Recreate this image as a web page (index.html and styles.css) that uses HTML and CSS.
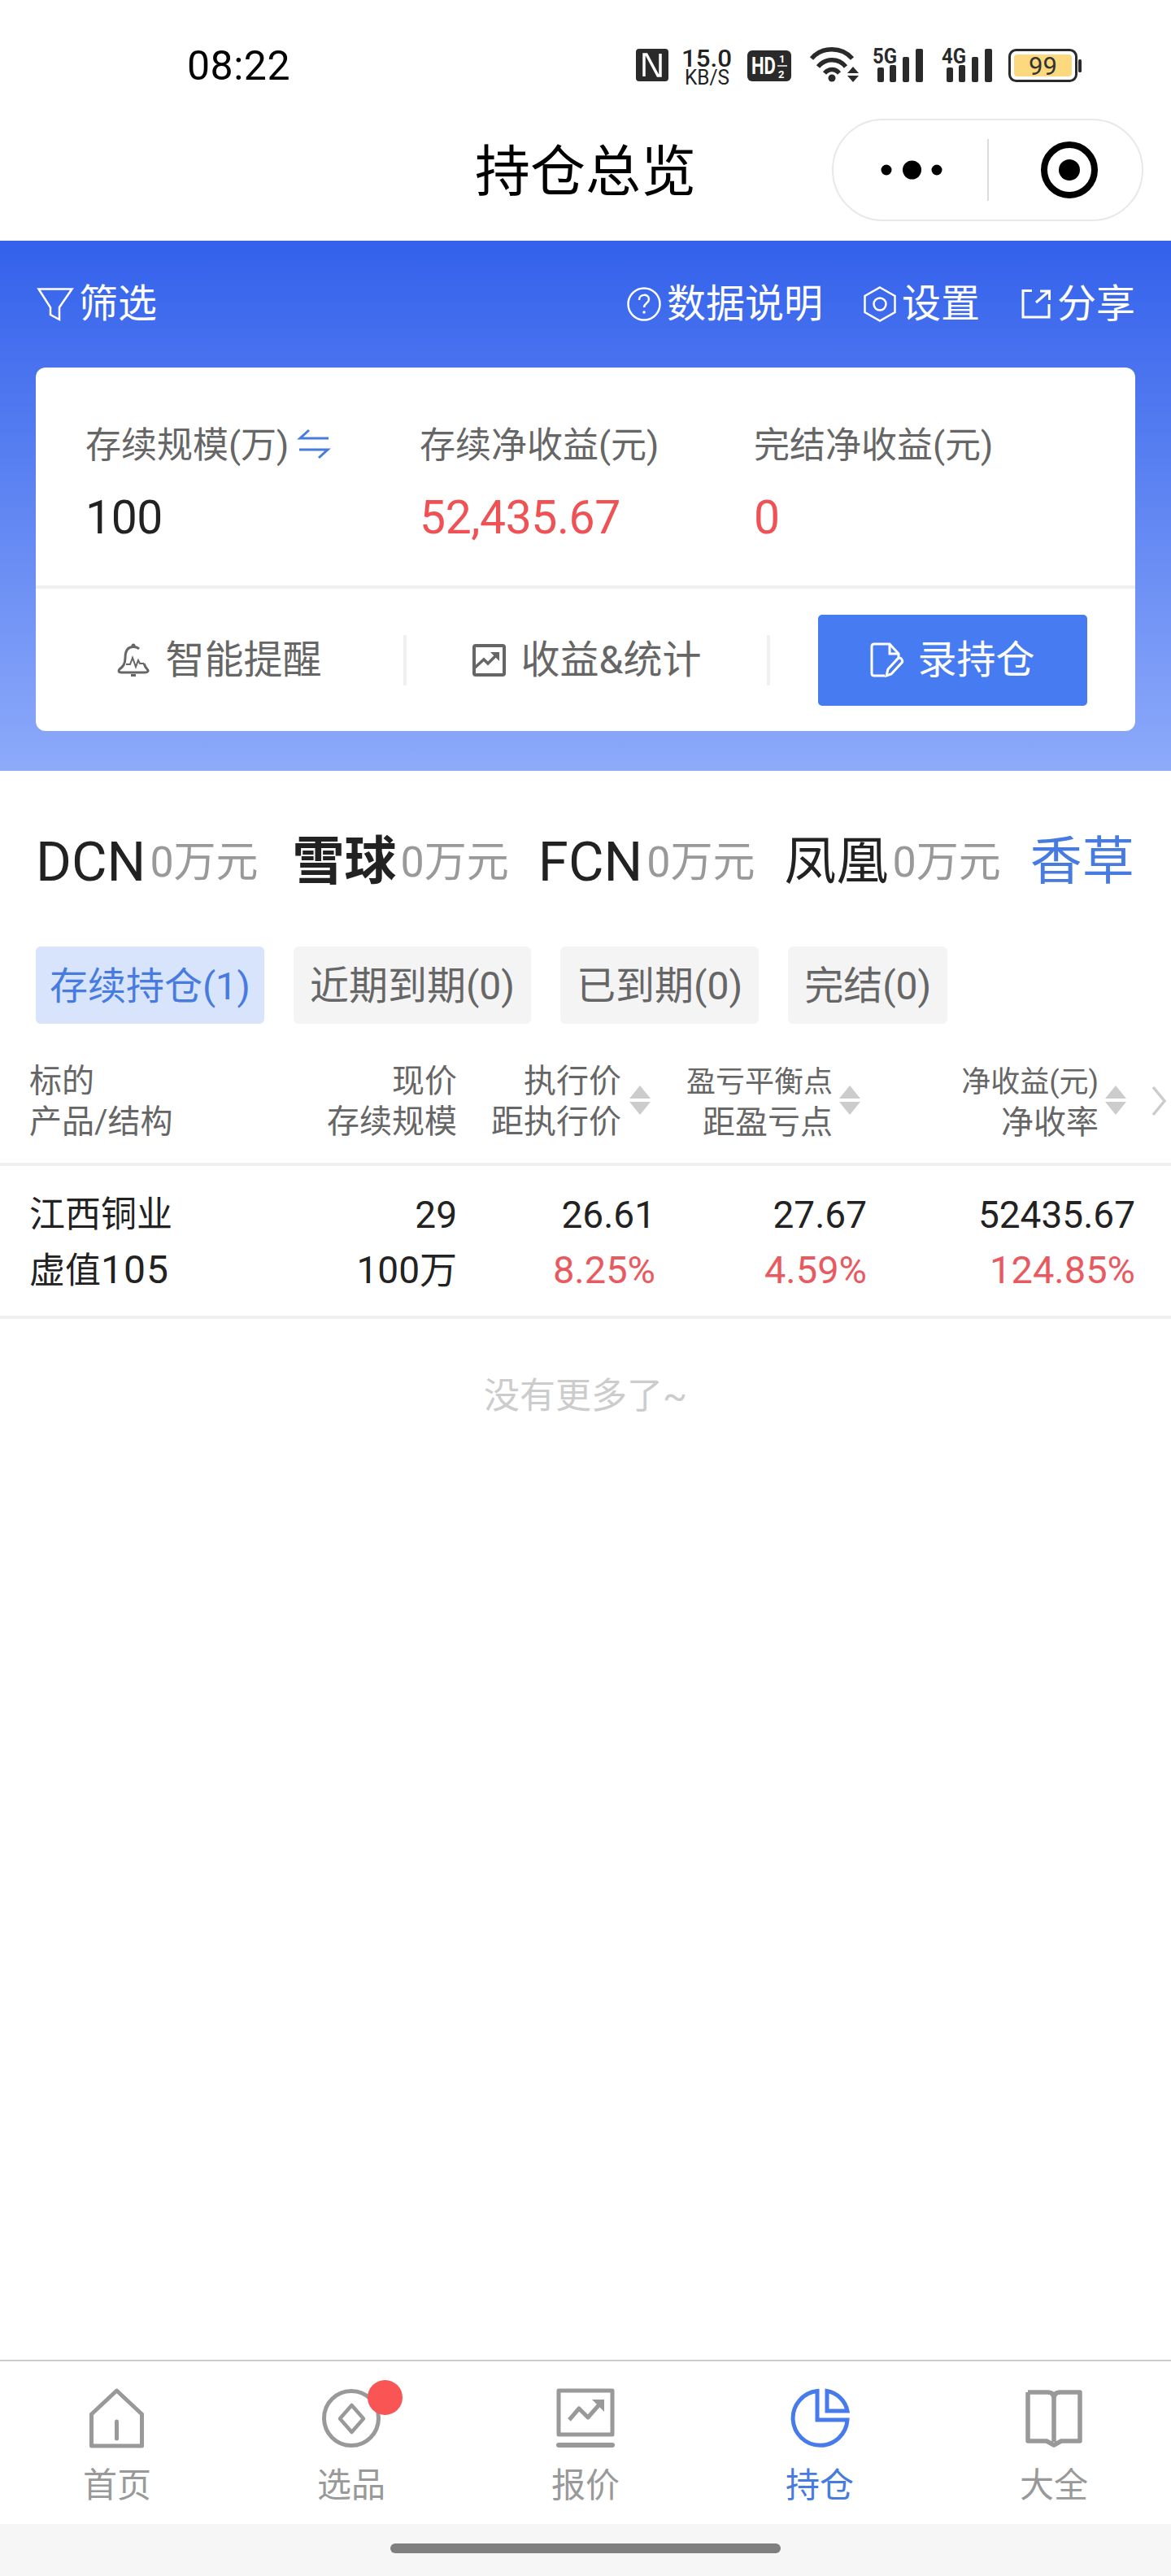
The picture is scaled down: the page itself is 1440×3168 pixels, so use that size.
FILE: index.html
```html
<!DOCTYPE html>
<html lang="zh-CN">
<head>
<meta charset="utf-8">
<title>持仓总览</title>
<link rel="stylesheet" href="styles.css">
</head>
<body>
<div class="page">
  <header class="status">
    <span class="time">08:22</span>
    <div class="sicons">
      <svg class="s-nfc" width="40" height="40" viewBox="0 0 40 40"><rect width="40" height="40" rx="4" fill="#2a2a2a"/><path d="M10 34V7h3l14 26h3V6" fill="none" stroke="#fff" stroke-width="3.500"/></svg>
      <svg class="s-speed" width="64" height="48" viewBox="0 0 64 48"><text x="1" y="24" class="sp1" textLength="62" lengthAdjust="spacingAndGlyphs">15.0</text><text x="5" y="46" class="sp2" textLength="55" lengthAdjust="spacingAndGlyphs">KB/S</text></svg>
      <svg class="s-hd" width="54" height="38" viewBox="0 0 54 38"><rect width="54" height="38" rx="6" fill="#2a2a2a"/><text x="5" y="29" class="hd" textLength="30" lengthAdjust="spacingAndGlyphs">HD</text><text x="39" y="15" class="hd2">1</text><text x="38" y="34" class="hd2">2</text><path d="M37 19h12" stroke="#fff" stroke-width="1.500"/></svg>
      <svg class="s-wifi" width="60" height="44" viewBox="0 0 60 44"><g fill="none" stroke="#2a2a2a" stroke-width="5.500"><path d="M2 15C15 0 39 0 52 15"/><path d="M10 25C19 14 35 14 44 25"/><path d="M18 33C23 27 31 27 36 33"/></g><circle cx="27" cy="39" r="4.500" fill="#2a2a2a"/><path d="M53 25l7 8H46zM46 36h14l-7 8z" fill="#2a2a2a"/></svg>
      <svg class="s-sig" width="62" height="44" viewBox="0 0 62 44"><text x="0" y="21" class="sg" textLength="30" lengthAdjust="spacingAndGlyphs">5G</text><rect x="6" y="26" width="8" height="18" rx="2"/><rect x="21" y="23" width="8" height="21" rx="2"/><rect x="37" y="13" width="8" height="31" rx="2"/><rect x="53" y="3" width="9" height="41" rx="2"/></svg>
      <svg class="s-sig" width="62" height="44" viewBox="0 0 62 44"><text x="0" y="21" class="sg" textLength="30" lengthAdjust="spacingAndGlyphs">4G</text><rect x="6" y="26" width="8" height="18" rx="2"/><rect x="21" y="23" width="8" height="21" rx="2"/><rect x="37" y="13" width="8" height="31" rx="2"/><rect x="53" y="3" width="9" height="41" rx="2"/></svg>
      <svg class="s-bat" width="90" height="42" viewBox="0 0 90 42"><rect x="1.500" y="1.500" width="82" height="38" rx="8" fill="#fff" stroke="#2a2a2a" stroke-width="3"/><rect x="7" y="7" width="71" height="27" rx="4" fill="#fcd97e"/><text x="42.500" y="32" class="bt">99</text><rect x="86" y="13" width="4" height="16" rx="1.500" fill="#2a2a2a"/></svg>
    </div>
  </header>

  <nav class="navbar">
    <span></span>
    <h1 class="title">持仓总览</h1>
    <div class="capsule">
      <svg width="90" height="26" viewBox="0 0 90 26"><circle cx="13" cy="13" r="6.500"/><circle cx="44.500" cy="13" r="11.500"/><circle cx="75" cy="13" r="6.500"/></svg>
      <i class="cap-line"></i>
      <svg width="72" height="72" viewBox="0 0 72 72"><circle cx="36" cy="36" r="31" fill="none" stroke="#000" stroke-width="8"/><circle cx="36" cy="36" r="13"/></svg>
    </div>
  </nav>

  <section class="hero">
    <div class="toolbar">
      <div class="tool">
        <svg width="44" height="40" viewBox="0 0 44 40"><path d="M1.500 1.500H42.500L27 24V39L16 33V24Z" fill="none" stroke="#fff" stroke-width="2.500"/></svg>
        <span>筛选</span>
      </div>
      <div class="tools-right">
        <div class="tool">
          <svg width="42" height="42" viewBox="0 0 42 42"><circle cx="21" cy="21" r="19.500" fill="none" stroke="#fff" stroke-width="2.500"/><path d="M15 16c0-8 12-8 12-1 0 5-6 5-6 10" fill="none" stroke="#fff" stroke-width="2.500"/><circle cx="21" cy="31" r="1.800" fill="#fff"/></svg>
          <span>数据说明</span>
        </div>
        <div class="tool">
          <svg width="40" height="44" viewBox="0 0 40 44"><path d="M20 1.500 38.500 12V32L20 42.500 1.500 32V12Z" fill="none" stroke="#fff" stroke-width="2.500"/><circle cx="20" cy="22" r="7.500" fill="none" stroke="#fff" stroke-width="2.500"/></svg>
          <span>设置</span>
        </div>
        <div class="tool">
          <svg width="38" height="38" viewBox="0 0 38 38"><path d="M14 2.500H3V35H35V19" fill="none" stroke="#fff" stroke-width="3"/><path d="M19 17 34 4M24 3H35.500V14" fill="none" stroke="#fff" stroke-width="3"/></svg>
          <span>分享</span>
        </div>
      </div>
    </div>

    <div class="card">
      <div class="stats">
        <div class="stat">
          <div class="stat-label">存续规模(万)<svg class="swap" width="38" height="36" viewBox="0 0 38 36"><path d="M37 11H2L13 1M1 25H36L25 35" fill="none" stroke="#477bdf" stroke-width="3"/></svg></div>
          <div class="stat-value">100</div>
        </div>
        <div class="stat">
          <div class="stat-label">存续净收益(元)</div>
          <div class="stat-value red">52,435.67</div>
        </div>
        <div class="stat">
          <div class="stat-label">完结净收益(元)</div>
          <div class="stat-value red">0</div>
        </div>
      </div>
      <div class="actions">
        <div class="action">
          <svg width="40" height="42" viewBox="0 0 40 42"><circle cx="20" cy="3" r="2.500" fill="#666"/><path d="M27 7C25 5 23 4.500 20 4.500 12 4.500 10 11 10 18 10 26 7 29 3 32 1 34 2 36 5 36H34C38 36 39 34 37 32 35 30 34 28 33 25" fill="none" stroke="#666" stroke-width="3"/><path d="M11 26h5l3-8 4 11 3-8 2 4h5" fill="none" stroke="#666" stroke-width="2"/><path d="M17 39.500h6" stroke="#666" stroke-width="3"/></svg>
          <span>智能提醒</span>
        </div>
        <i class="a-line"></i>
        <div class="action">
          <svg width="41" height="40" viewBox="0 0 41 40"><rect x="2" y="2" width="37" height="36" rx="2" fill="none" stroke="#666" stroke-width="4"/><path d="M3 29 14 19l5 5L30 13" fill="none" stroke="#666" stroke-width="3.500"/><path d="M22 10H33V21Z" fill="#666"/></svg>
          <span>收益&amp;统计</span>
        </div>
        <i class="a-line"></i>
        <div class="action">
          <button class="rec" type="button">
            <svg width="42" height="44" viewBox="0 0 42 44"><path d="M18 41H5Q2 41 2 38V5Q2 2 5 2H24L35 14V19" fill="none" stroke="#fff" stroke-width="3"/><path d="M24 2V14H35" fill="none" stroke="#fff" stroke-width="3"/><path d="M20 41 22 33 34 20Q37 18 39 21 41 24 38 26L26 39Z" fill="none" stroke="#fff" stroke-width="3"/></svg>
            <span>录持仓</span>
          </button>
        </div>
      </div>
    </div>
  </section>

  <main class="content">
    <div class="cats">
      <div class="cat"><b class="latin">DCN</b><small>0万元</small></div>
      <div class="cat"><b class="heavy">雪球</b><small>0万元</small></div>
      <div class="cat"><b class="latin">FCN</b><small>0万元</small></div>
      <div class="cat"><b>凤凰</b><small>0万元</small></div>
      <div class="cat"><b class="blue">香草</b></div>
    </div>

    <div class="tabs">
      <div class="tab on">存续持仓(1)</div>
      <div class="tab">近期到期(0)</div>
      <div class="tab">已到期(0)</div>
      <div class="tab">完结(0)</div>
    </div>

    <div class="thead grid">
      <div class="th left"><span>标的<br>产品/结构</span></div>
      <div class="th plain"><span>现价<br>存续规模</span></div>
      <div class="th c3"><span>执行价<br>距执行价</span><svg class="sort" width="26" height="36" viewBox="0 0 26 36"><path d="M13 0 26 16H0ZM0 20H26L13 36Z"/></svg></div>
      <div class="th c4"><span><em>盈亏平衡点</em><br>距盈亏点</span><svg class="sort" width="26" height="36" viewBox="0 0 26 36"><path d="M13 0 26 16H0ZM0 20H26L13 36Z"/></svg></div>
      <div class="th c5"><span><em>净收益(元)</em><br>净收率</span><svg class="sort" width="26" height="36" viewBox="0 0 26 36"><path d="M13 0 26 16H0ZM0 20H26L13 36Z"/></svg></div>
      <svg class="more" width="18" height="36" viewBox="0 0 18 36"><path d="M2 1 16 18 2 35" fill="none" stroke="#ccc" stroke-width="3.500"/></svg>
    </div>

    <div class="trow grid">
      <div class="td left">江西铜业<br>虚值<span class="num">105</span></div>
      <div class="td">29<br>100万</div>
      <div class="td">26.61<br><span class="pct">8.25%</span></div>
      <div class="td">27.67<br><span class="pct">4.59%</span></div>
      <div class="td">52435.67<br><span class="pct">124.85%</span></div>
    </div>

    <p class="nomore">没有更多了~</p>
  </main>

  <footer class="tabbar">
    <div class="tb">
      <svg width="68" height="74" viewBox="0 0 68 74"><path d="M33.500 3 64.500 32V71H2.500V32Z" fill="none" stroke="#999" stroke-width="5" stroke-linejoin="round"/><path d="M33.500 41V62" stroke="#999" stroke-width="5" stroke-linecap="round"/></svg>
      <span>首页</span>
    </div>
    <div class="tb">
      <svg width="74" height="74" viewBox="0 0 74 74"><circle cx="37" cy="37" r="33.500" fill="none" stroke="#999" stroke-width="5"/><path d="M37.500 21 52 37.500 37.500 54 23 37.500Z" fill="none" stroke="#999" stroke-width="4.500" stroke-linejoin="round"/></svg>
      <i class="dot"></i>
      <span>选品</span>
    </div>
    <div class="tb">
      <svg width="72" height="74" viewBox="0 0 72 74"><path d="M3 3H69V57H3Z" fill="none" stroke="#999" stroke-width="5" stroke-linejoin="round"/><path d="M3 70H69" stroke="#999" stroke-width="6" stroke-linecap="round"/><path d="M16 39 28 25 39 36 54 19" fill="none" stroke="#999" stroke-width="5" stroke-linejoin="round"/><path d="M44 14H59V29Z" fill="#999"/></svg>
      <span>报价</span>
    </div>
    <div class="tb active">
      <svg width="74" height="74" viewBox="0 0 74 74"><path d="M34 3.500A33.500 33.500 0 1 0 71 39H34Z" fill="none" stroke="#477bec" stroke-width="5"/><path d="M46 3.500A31 31 0 0 1 71 28H46Z" fill="none" stroke="#477bec" stroke-width="5"/></svg>
      <span>持仓</span>
    </div>
    <div class="tb">
      <svg width="72" height="74" viewBox="0 0 72 74"><path d="M4 5V65H27L36 70 45 65H68V5H44Q36 5 36 13V66M36 13Q36 5 28 5H4" fill="none" stroke="#999" stroke-width="5.500" stroke-linejoin="round"/></svg>
      <span>大全</span>
    </div>
  </footer>
  <div class="homebar"><i></i></div>
</div>
</body>
</html>
```
FILE: styles.css
```css
* { box-sizing: border-box; margin: 0; padding: 0; }
html, body { height: 100%; }
body {
  background: #fff;
  color: #222;
  font-family: Roboto, "Noto Sans CJK SC", sans-serif;
  font-weight: 400;
}
svg { display: block; flex: none; overflow: visible; }
i, em { font-style: normal; }
.page { height: 100vh; display: flex; flex-direction: column; }

/* status bar */
.status { height: 122px; flex: none; display: flex; justify-content: space-between; padding: 57px 110px 0 230px; }
.time { font-size: 50px; line-height: 46px; height: 46px; color: #000; letter-spacing: .5px; margin-top: 1px; }
.sicons { display: flex; align-items: flex-start; }
.s-nfc { margin-top: 3px; }
.s-speed { margin: 1px 0 0 15px; }
.s-hd { margin: 5px 0 0 18px; }
.s-wifi { margin: 0 0 0 23px; }
.s-sig { margin-left: 17px; fill: #2a2a2a; }
.s-sig + .s-sig { margin-left: 23px; }
.s-bat { margin: 3px 0 0 20px; }
.sp1 { font-size: 30px; fill: #222; font-weight: 500; }
.sp2 { font-size: 25px; fill: #222; }
.hd { font-size: 30px; font-weight: 700; fill: #fff; }
.hd2 { font-size: 13px; font-weight: 700; fill: #fff; }
.sg { font-size: 26px; font-weight: 700; fill: #2a2a2a; }
.bt { font-size: 31px; fill: #333; text-anchor: middle; }

/* navbar */
.navbar { height: 174px; flex: none; display: grid; grid-template-columns: 1fr auto 1fr; align-items: center; }
.title { font-size: 68px; line-height: 80px; font-weight: 400; color: #000; margin-top: 5px; }
.capsule {
  justify-self: end;
  margin-right: 34px;
  width: 383px; height: 126px;
  border: 2px solid #e8e8e8;
  border-radius: 63px;
  display: flex; align-items: center;
  padding-left: 52px;
}
.cap-line { width: 2px; height: 76px; background: #ddd; margin: 0 63px 0 47px; }

/* hero */
.hero {
  flex: none;
  height: 652px;
  background: linear-gradient(180deg, #3361eb 0%, #8daafa 100%);
  padding: 0 44px;
}
.toolbar { height: 156px; display: flex; align-items: center; justify-content: space-between; padding-left: 2px; color: #fff; font-size: 48px; }
.tools-right { display: flex; gap: 50px; }
.tool { display: flex; align-items: center; gap: 7px; line-height: 60px; }
.card { background: #fff; border-radius: 12px; height: 447px; }
.stats { height: 272px; border-bottom: 4px solid #f0f0f0; display: grid; grid-template-columns: 411px 411px 1fr; padding: 66px 0 0 61px; }
.stat-label { font-size: 44px; line-height: 60px; color: #666; display: flex; align-items: center; }
.swap { margin-left: 12px; margin-top: -4px; }
.stat-value { font-size: 57px; line-height: 80px; margin-top: 19px; color: #222; letter-spacing: -.4px; }
.red { color: #f05154; }
.actions { height: 175px; display: grid; grid-template-columns: 452px 4px 443px 4px 1fr; align-items: center; }
.a-line { width: 4px; height: 62px; background: #f0f0f0; }
.action { display: flex; align-items: center; justify-content: center; gap: 19px; font-size: 48px; color: #666; line-height: 60px; }
.rec {
  width: 331px; height: 112px;
  background: #477bf2; color: #fff;
  border: 0; border-radius: 5px;
  font: inherit;
  display: flex; align-items: center; justify-content: center; gap: 16px;
}

/* content */
.content { flex: 1; }
.cats { display: flex; gap: 36px; padding: 73px 0 0 44px; height: 216px; }
.cat { display: flex; align-items: center; gap: 5px; height: 78px; }
.cat:first-child { margin-right: 6px; }
.cat b { font-size: 64px; font-weight: 400; line-height: 78px; color: #222; }
.cat b.latin { font-size: 67px; }
.cat b.heavy { font-weight: 700; }
.cat b.blue { color: #477bdf; }
.cat small { font-size: 52px; color: #999; line-height: 78px; margin-top: 2px; }
.tabs { display: flex; gap: 36px; padding-left: 44px; }
.tab { height: 95px; line-height: 97px; padding: 0 20px; font-size: 48px; border-radius: 6px; background: #f4f4f4; color: #666; }
.tab.on { background: #d8e4fb; color: #477bdf; font-size: 47px; padding: 0 17px; }

.grid { display: grid; grid-template-columns: 300px 226px 244px 260px 330px; padding-left: 36px; }
.thead { position: relative; height: 175px; padding-top: 46px; border-bottom: 4px solid #f0f0f0; }
.th { display: flex; justify-content: flex-end; gap: 8px; font-size: 40px; line-height: 50px; color: #666; text-align: right; height: 100px; }
.th.left { justify-content: flex-start; text-align: left; }
.th .sort { margin-top: 30px; fill: #ccc; }
.c3 { gap: 10px; }
.c3 .sort { margin-right: 6px; }
.c4 .sort { margin-right: 8px; }
.c5 .sort { margin-right: 11px; }
.th em { font-size: 36px; }
.more { position: absolute; right: 6px; top: 77px; }
.trow { height: 188px; padding-top: 26px; border-bottom: 4px solid #f0f0f0; }
.td { font-size: 46px; line-height: 68px; color: #222; text-align: right; }
.td.left { text-align: left; font-size: 44px; }
.num { font-size: 48px; letter-spacing: 1px; }
.pct { color: #e85a60; font-size: 47px; }
.nomore { margin-top: 65px; text-align: center; font-size: 44px; line-height: 60px; color: #ccc; }

/* tabbar */
.tabbar { flex: none; height: 202px; border-top: 2px solid #ccc; background: #fff; display: grid; grid-template-columns: repeat(5, 1fr); }
.tb { position: relative; display: flex; flex-direction: column; align-items: center; padding-top: 33px; font-size: 42px; line-height: 50px; color: #999; }
.tb span { margin-top: 21px; }
.tb.active { color: #477bdf; }
.dot { position: absolute; left: 164px; top: 23px; width: 43px; height: 43px; border-radius: 50%; background: #fa5555; }
.homebar { flex: none; height: 64px; background: #f6f6f6; padding: 24px 480px 0; }
.homebar i { display: block; height: 12px; border-radius: 6px; background: #7f7f7f; }
```
